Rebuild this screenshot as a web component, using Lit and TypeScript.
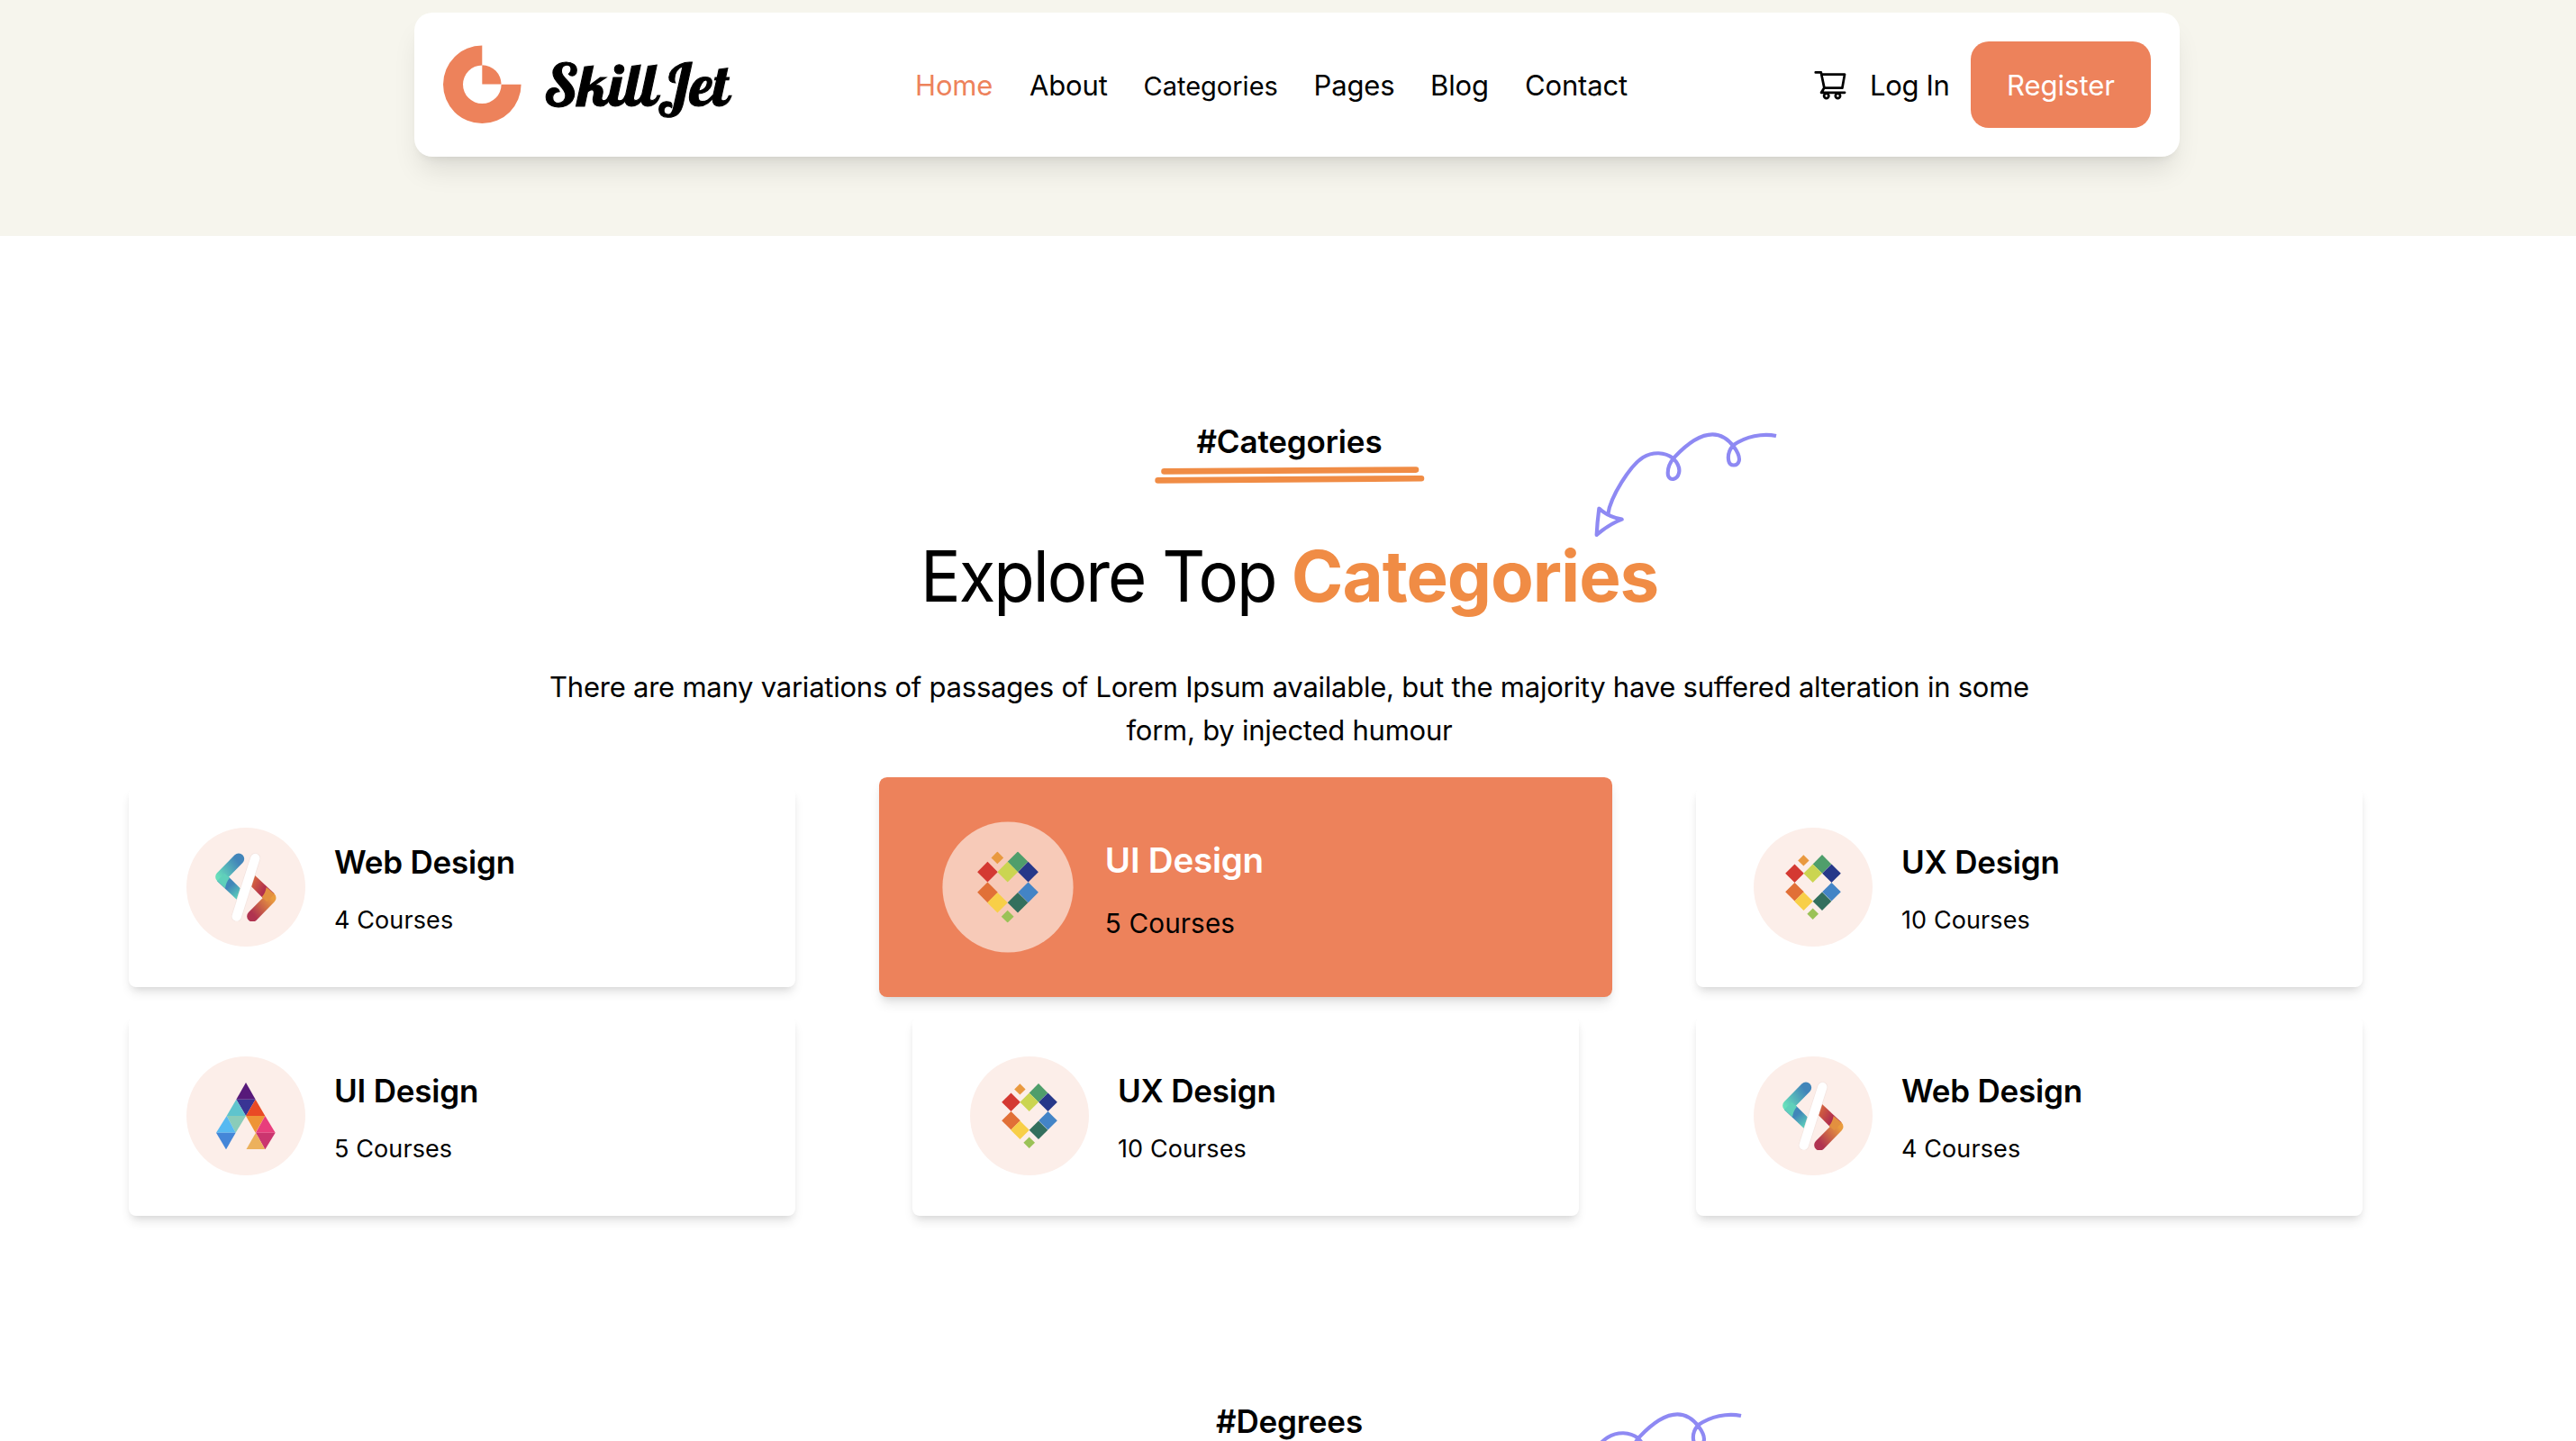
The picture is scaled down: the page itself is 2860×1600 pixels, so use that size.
import { LitElement, html, css, svg } from "lit";
import { customElement, property } from "lit/decorators.js";
import { classMap } from "lit/directives/class-map.js";

type IconName = "code" | "mosaic" | "prism";

interface Category {
  title: string;
  courses: number;
  icon: IconName;
  active?: boolean;
}

const CATEGORIES: Category[] = [
  { title: "Web Design", courses: 4, icon: "code" },
  { title: "UI Design", courses: 5, icon: "mosaic", active: true },
  { title: "UX Design", courses: 10, icon: "mosaic" },
  { title: "UI Design", courses: 5, icon: "prism" },
  { title: "UX Design", courses: 10, icon: "mosaic" },
  { title: "Web Design", courses: 4, icon: "code" },
];

const NAV = ["Home", "About", "Categories", "Pages", "Blog", "Contact"];

const codeIcon = html`<svg width="67.7" height="76.7" viewBox="27 34 203 230" fill="none">
  <defs>
    <linearGradient id="tealUp" gradientUnits="userSpaceOnUse" x1="112" y1="60" x2="36" y2="114">
      <stop offset="0.1" stop-color="#4285b9" /><stop offset="1" stop-color="#68dfbb" />
    </linearGradient>
    <linearGradient id="tealDown" gradientUnits="userSpaceOnUse" x1="72" y1="140" x2="104" y2="180">
      <stop offset="0.1" stop-color="#4186b9" /><stop offset="1" stop-color="#5ccdba" />
    </linearGradient>
    <linearGradient id="warmDown" gradientUnits="userSpaceOnUse" x1="145" y1="245" x2="222" y2="184">
      <stop offset="0.1" stop-color="#b03350" /><stop offset="0.95" stop-color="#ea9c3e" />
    </linearGradient>
    <linearGradient id="warmUp" gradientUnits="userSpaceOnUse" x1="150" y1="135" x2="192" y2="158">
      <stop offset="0" stop-color="#d2603f" /><stop offset="1" stop-color="#b02d4f" />
    </linearGradient>
  </defs>
  <path d="M33 128 L72 114 L110 152 L98 189 Z" fill="url(#tealDown)" />
  <path d="M105 54 L46 114" stroke="url(#tealUp)" stroke-width="37" stroke-linecap="round" />
  <path d="M33 127 L60 152 C62 138 66 128 75 117 L58 102 Z" fill="#5fd0ba" />
  <path d="M224 170 L185 184 L147 146 L159 109 Z" fill="url(#warmUp)" />
  <path d="M151 245 L211 184" stroke="url(#warmDown)" stroke-width="37" stroke-linecap="round" />
  <path d="M224 171 L197 148 C195 160 191 172 182 181 L199 196 Z" fill="#e3903f" />
  <path d="M160 52 L98 246" stroke="#e9d9d5" stroke-width="35" stroke-linecap="round" opacity="0.5" />
  <path d="M160 52 L98 246" stroke="#fff" stroke-width="31" stroke-linecap="round" />
</svg>`;

const TILES: [number, number, number, string][] = [
  [20.4, 6.4, 6.2, "#e9993f"],
  [41, 10.4, 10.3, "#4f9e6b"],
  [10.5, 20.7, 10.3, "#d43932"],
  [30.7, 20.7, 10.3, "#cbd551"],
  [51.5, 20.7, 10.3, "#263889"],
  [10.5, 41.3, 10.3, "#e17037"],
  [51.5, 41.3, 10.3, "#4384c6"],
  [20.5, 51.7, 10.3, "#f8cf48"],
  [41, 51.7, 10.3, "#336f5d"],
  [30.7, 65.7, 6.3, "#9bc257"],
];

const mosaicIcon = html`<svg width="62" height="72" viewBox="0 0 62 72">
  ${TILES.map(
    ([x, y, r, c]) => svg`<path d="M${x} ${y - r} L${x + r} ${y} L${x} ${y + r} L${x - r} ${y} Z" fill=${c} />`
  )}
</svg>`;

const FACETS: [string, string][] = [
  ["127,800 95,856 159,856", "#57197a"],
  ["95,856 159,856 127,911", "#393494"],
  ["95,856 127,911 63,911", "#5fc4cd"],
  ["159,856 191,911 127,911", "#e94a25"],
  ["63,911 127,911 93,967", "#8accb9"],
  ["127,911 191,911 159,967", "#ee9436"],
  ["63,911 93,967 28,967", "#57b9f1"],
  ["191,911 225,967 160,967", "#e83e7c"],
  ["28,967 93,967 61,1023", "#4486d8"],
  ["160,967 225,967 191,1023", "#cb356f"],
  ["160,967 191,1023 128,1023", "#ecb15c"],
];

const prismIcon = html`<svg width="66" height="74.7" viewBox="28 800 198 224">
  ${FACETS.map(([points, fill]) => svg`<polygon points=${points} fill=${fill} />`)}
</svg>`;

const ICONS = { code: codeIcon, mosaic: mosaicIcon, prism: prismIcon };

const squiggle = html`<svg width="230" height="135" viewBox="0 0 690 405" fill="none" stroke="#8681f3" stroke-width="12.5" stroke-linejoin="round" opacity="0.93">
  <path d="M76 302 C84 245 150 140 192 114 C225 94 265 95 293 117 C308 132 316 150 312 166 C306 190 281 192 276 174 C273 155 280 132 298 112 C345 62 388 37 424 37 C458 37 480 58 495 78 C508 96 516 112 512 126 C507 144 482 144 478 126 C473 104 480 88 493 73 C535 44 590 32 636 42" />
  <path d="M46 284 Q40 330 38 372 Q80 336 122 320 Q78 312 46 284 Z" />
</svg>`;

@customElement("site-header")
class SiteHeader extends LitElement {
  static styles = css`
    :host {
      display: block;
      box-sizing: border-box;
      height: 262px;
      padding: 14px 440px 0 460px;
      background: #f6f5ed;
    }
    .bar {
      display: flex;
      align-items: center;
      box-sizing: border-box;
      height: 160px;
      padding: 0 32px;
      border-radius: 20px;
      background: #fff;
      box-shadow: 0 20px 30px -6px rgba(0, 0, 0, 0.1), 0 8px 12px -8px rgba(0, 0, 0, 0.1);
      font-size: 31px;
      line-height: 48px;
    }
    .brand {
      display: flex;
      align-items: center;
      flex: 0 0 524px;
    }
    .mark {
      display: block;
      flex: none;
    }
    .name {
      margin-left: 25px;
      font: 400 64px/80px Lobster, "Lobster Two", cursive;
      letter-spacing: 0.5px;
      -webkit-text-stroke: 1.1px #000;
      transform: scaleX(1.025);
      transform-origin: 0 0;
    }
    .nav {
      display: grid;
      grid-template-columns: 127px 126.5px 189px 129.5px 105px auto;
      align-items: baseline;
      flex: 1;
      padding-top: 2px;
    }
    .link {
      letter-spacing: -0.15px;
    }
    .current {
      color: #ed825b;
    }
    .small {
      font-size: 29px;
      letter-spacing: 0;
    }
    .actions {
      display: flex;
      align-items: center;
    }
    .cart {
      display: block;
      margin-right: 24px;
    }
    .login {
      width: 112px;
      padding-top: 2px;
      letter-spacing: -0.35px;
    }
    .register {
      box-sizing: border-box;
      width: 200px;
      height: 96px;
      padding-top: 1px;
      border-radius: 20px;
      background: #ed825b;
      color: #fff;
      line-height: 96px;
      text-align: center;
    }
  `;

  render() {
    return html`<div class="bar">
      <div class="brand">
        <svg class="mark" width="87" height="88" viewBox="0 0 87 88" fill="#ed825b">
          <path d="M43.3 0.5 A43.3 43.3 0 1 0 86.6 43.8 H64.6 A21.3 21.3 0 1 1 43.3 22.5 Z" />
          <path d="M43.3 43.5 V22.3 A21.3 21.3 0 0 1 64.6 43.5 Z" />
        </svg>
        <span class="name">SkillJet</span>
      </div>
      <nav class="nav">
        ${NAV.map(
          (item, i) =>
            html`<span class=${classMap({ link: true, current: i === 0, small: item === "Categories" })}>${item}</span>`
        )}
      </nav>
      <div class="actions">
        <svg class="cart" width="40" height="40" viewBox="0 0 1024 1024">
          <path d="M922.9 701.9H327.4l29.9-60.9 496.8-.9c16.8 0 31.2-12 34.2-28.6l68.8-385.1c1.8-10.1-.9-20.5-7.5-28.4a34.99 34.99 0 0 0-26.6-12.5l-632-2.1-5.4-25.4c-3.4-16.2-18-28-34.6-28H96.5a35.3 35.3 0 1 0 0 70.6h125.9L246 312.8l58.1 281.3-74.8 122.1a34.96 34.96 0 0 0-3 36.8c6 11.9 18.1 19.4 31.5 19.4h62.8a102.43 102.43 0 0 0-20.6 61.7c0 56.6 46 102.6 102.6 102.6s102.6-46 102.6-102.6c0-22.3-7.4-44-20.6-61.7h161.1a102.43 102.43 0 0 0-20.6 61.7c0 56.6 46 102.6 102.6 102.6s102.6-46 102.6-102.6c0-22.3-7.4-44-20.6-61.7H923c19.4 0 35.3-15.8 35.3-35.3a35.42 35.42 0 0 0-35.4-35.2zM305.7 253l575.8 1.9-56.4 315.8-452.3.8L305.7 253zm96.9 612.7c-17.4 0-31.6-14.2-31.6-31.6 0-17.4 14.2-31.6 31.6-31.6s31.6 14.2 31.6 31.6a31.6 31.6 0 0 1-31.6 31.6zm325.1 0c-17.4 0-31.6-14.2-31.6-31.6 0-17.4 14.2-31.6 31.6-31.6s31.6 14.2 31.6 31.6a31.6 31.6 0 0 1-31.6 31.6z" />
        </svg>
        <span class="login">Log In</span>
        <div class="register">Register</div>
      </div>
    </div>`;
  }
}

@customElement("category-card")
class CategoryCard extends LitElement {
  @property({ attribute: false }) category!: Category;

  static styles = css`
    :host {
      display: block;
    }
    .card {
      display: flex;
      align-items: center;
      gap: 32px;
      box-sizing: border-box;
      height: 222px;
      padding: 0 64px;
      border-radius: 8px;
      background: #fff;
      box-shadow: 0 8px 12px -2px rgba(0, 0, 0, 0.1), 0 4px 8px -4px rgba(0, 0, 0, 0.1);
    }
    .active {
      background: #ed825b;
      transform: scale(1.1);
    }
    .disc {
      display: flex;
      align-items: center;
      justify-content: center;
      width: 132px;
      height: 132px;
      border-radius: 50%;
      background: #fceee9;
    }
    .active .disc {
      background: #f7cab8;
    }
    .text {
      display: flex;
      flex-direction: column;
      gap: 17px;
      padding-top: 2px;
    }
    .title {
      font-size: 35px;
      font-weight: 600;
      line-height: 54px;
      letter-spacing: -0.2px;
    }
    .active .title {
      color: #fff;
    }
    .count {
      font-size: 27px;
      line-height: 42px;
      letter-spacing: 0.1px;
    }
  `;

  render() {
    const { title, courses, icon, active } = this.category;
    return html`<div class=${classMap({ card: true, active: !!active })}>
      <div class="disc">${ICONS[icon]}</div>
      <div class="text">
        <div class="title">${title}</div>
        <div class="count">${courses} Courses</div>
      </div>
    </div>`;
  }
}

@customElement("app-root")
class AppRoot extends LitElement {
  static styles = css`
    :host {
      display: block;
      height: 1600px;
      overflow: hidden;
      background: #fff;
      color: #000;
      font-family: Inter, "Liberation Sans", sans-serif;
    }
    .section {
      position: relative;
      display: flex;
      flex-direction: column;
      align-items: center;
      padding: 200px 0 0 3px;
    }
    .tag {
      font-size: 35px;
      font-weight: 600;
      line-height: 56px;
      letter-spacing: -0.15px;
    }
    .underline {
      display: block;
      width: 300px;
      height: 20px;
    }
    .heading {
      display: flex;
      margin: 62px 0 0;
      font-size: 78px;
      font-weight: 400;
      line-height: 80px;
      white-space: pre;
    }
    .lead {
      width: 412px;
      letter-spacing: -2.1px;
      transform: scaleX(0.953);
      transform-origin: 0 0;
    }
    .accent {
      color: #f08c45;
      font-weight: 700;
      letter-spacing: -1.05px;
    }
    .copy {
      width: 1720px;
      margin: 59px 0 0;
      font-size: 31px;
      line-height: 48px;
      letter-spacing: -0.24px;
      text-align: center;
    }
    .squiggle {
      position: absolute;
      left: 1760px;
      top: 208px;
    }
    .grid {
      display: grid;
      grid-template-columns: repeat(3, 740px);
      gap: 32px 130px;
      padding: 39px 0 0 143px;
    }
    .degrees .squiggle {
      left: 1721px;
      top: 208px;
    }
  `;

  render() {
    return html`
      <site-header></site-header>
      <section class="section">
        <div class="tag">#Categories</div>
        <svg class="underline" viewBox="0 0 300 20" stroke="#f08c45" stroke-width="6.6" stroke-linecap="round">
          <path d="M10.5 5.4 L290 3.6" />
          <path d="M3.6 15.4 L296 13.2" />
        </svg>
        <h1 class="heading"><span class="lead">Explore Top</span><span class="accent">Categories</span></h1>
        <p class="copy">There are many variations of passages of Lorem Ipsum available, but the majority have suffered alteration in some<br />form, by injected humour</p>
        <div class="squiggle">${squiggle}</div>
      </section>
      <div class="grid">
        ${CATEGORIES.map((c) => html`<category-card .category=${c}></category-card>`)}
      </div>
      <section class="section degrees">
        <div class="tag">#Degrees</div>
        <div class="squiggle">${squiggle}</div>
      </section>
    `;
  }
}
